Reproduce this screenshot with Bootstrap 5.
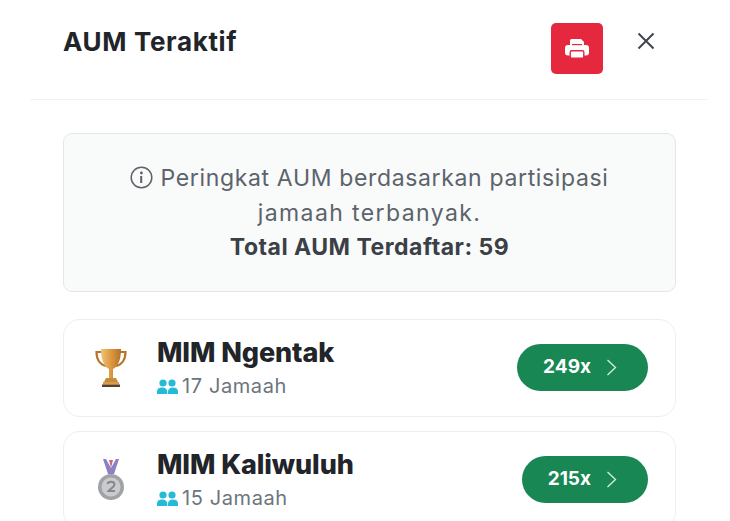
<!doctype html>
<html lang="id"><head><meta charset="utf-8"><title>AUM Teraktif</title>
<link href="https://cdn.jsdelivr.net/npm/bootstrap@5.3.0/dist/css/bootstrap.min.css" rel="stylesheet">
<style>
html,body{height:521px;overflow:hidden;background:#fff}
body{font-family:Inter,"Liberation Sans",sans-serif;color:#212529}
.sheet{margin:0 22px 0 30px;overflow:hidden;height:521px}
.head-bar{height:100px;border-bottom:1px solid #f1f2f3;padding:0 49px 0 33px}
.head-title{font-size:26px;font-weight:700;color:#212529;letter-spacing:.65px;margin:0;line-height:1;position:relative;top:-8px}
.print-btn{width:52px;height:51px;background:#e6283f;border:0;border-radius:5px;padding:0;margin-right:30px;position:relative;top:-1px}
.close-x{background:none;border:0;padding:0;width:26px;height:26px;position:relative;top:-9px}
.main-area{padding:33px 32px 0 33px}
.info-box{height:159px;background:#f9fafa;border:1px solid #e4e7ea;border-radius:9px;padding:27px 30px 0;text-align:center;font-size:23px;line-height:34.5px;color:#5c636a;margin-bottom:27px;letter-spacing:.65px}
.info-box svg{vertical-align:-3px}
.info-wide{letter-spacing:1.4px}
.info-total{font-weight:700;color:#3a4046;font-size:23px;letter-spacing:.5px}
.rank-row{height:98px;border:1px solid #eceef0;border-radius:17px;background:#fff;padding:0 27px 0 30px;margin-bottom:14px}
.rank-icon{width:34px;flex:none;margin-right:29px}
.rank-name{font-size:27px;font-weight:800;line-height:32px;color:#212529;letter-spacing:-.1px}
.rank-sub{font-size:20px;line-height:26px;color:#6c757d;margin-top:4px;letter-spacing:.6px}
.rank-sub svg{vertical-align:-1px;margin-right:4px}
.count-pill{height:47px;background:#198754;color:#fff;border:0;border-radius:24px;font-size:19px;font-weight:700;padding:0 31px 0 26px;gap:15px;margin-top:-1px;margin-left:-1px}
</style></head><body>
<div class="sheet">
  <div class="head-bar d-flex align-items-center">
    <h1 class="head-title flex-grow-1">AUM Teraktif</h1>
    <button class="print-btn d-flex align-items-center justify-content-center" aria-label="Cetak">
      <svg width="24" height="20" viewBox="0 0 24 20"><path fill="#fff" d="M6.500 0h9.500l3 3v4H5V1.500A1.500 1.500 0 0 1 6.500 0z"/><rect y="6" width="24" height="10.500" rx="3" fill="#fff"/><rect x="5.200" y="11.700" width="13.600" height="7.600" rx="1.500" fill="#fff" stroke="#e6283f" stroke-width="1.400"/><path fill="#e6283f" d="M7 5h10v1.200H7z"/></svg>
    </button>
    <button class="close-x" aria-label="Tutup"><svg width="26" height="26" viewBox="0 0 26 26"><path d="M5.500 5.500l15 15M20.500 5.500l-15 15" stroke="#3f4650" stroke-width="2" fill="none"/></svg></button>
  </div>
  <div class="main-area">
    <div class="info-box">
      <svg width="23" height="23" viewBox="0 0 23 23"><circle cx="11.500" cy="11.500" r="10.300" fill="none" stroke="#5c636a" stroke-width="1.500"/><path d="M10.200 10h2v7h-2zM10 7a1.400 1.400 0 1 0 2.800 0 1.400 1.400 0 1 0-2.800 0z" fill="#5c636a"/></svg>
      Peringkat AUM berdasarkan partisipasi<br><span class="info-wide">jamaah terbanyak.</span><br><span class="info-total">Total AUM Terdaftar: 59</span>
    </div>
    <div class="rank-row d-flex align-items-center">
      <svg class="rank-icon" height="40" viewBox="0 0 34 40">
        <defs><linearGradient id="goldcup" x1="0" x2="1" y1="0" y2="0"><stop offset="0" stop-color="#f0c274"/><stop offset=".55" stop-color="#d9953c"/><stop offset="1" stop-color="#b4702a"/></linearGradient></defs>
        <path d="M8 4H2.500c0 8 4 13 10 14M26 4h5.500c0 8-4 13-10 14" fill="none" stroke="#b8732a" stroke-width="2.200"/>
        <path d="M7 1h20c0 9-2 17-8 20v9h-4v-9C9 18 7 10 7 1z" fill="url(#goldcup)"/>
        <path d="M12 30h10l2 4H10z" fill="#c98a3a"/><path d="M9 34h16v2.500H9z" fill="#d79c4e"/><path d="M8 36.500h18V39H8z" fill="#5c3f24"/>
      </svg>
      <div class="flex-grow-1">
        <div class="rank-name">MIM Ngentak</div>
        <div class="rank-sub"><svg width="21" height="15" viewBox="0 0 21 15"><g fill="#25bbd8"><circle cx="6" cy="4" r="3.600"/><circle cx="15" cy="4" r="3.600"/><path d="M0 15v-2.500C0 10 2 8.500 5 8.500s5 1.500 5.300 4V15zM11 15v-2.500c.3-2.500 2-4 5-4s5 1.500 5 4V15z"/></g></svg>17 Jamaah</div>
      </div>
      <button class="count-pill d-flex align-items-center">249x <svg width="11" height="17" viewBox="0 0 11 17"><path d="M1.500 1l8 7.500-8 7.500" fill="none" stroke="#d8efe3" stroke-width="1.300"/></svg></button>
    </div>
    <div class="rank-row d-flex align-items-center">
      <svg class="rank-icon" height="42" viewBox="0 0 34 42">
        <path d="M9 0l5 15h6l5-15h-3l-5 9-5-9z" fill="#8d80c4"/><path d="M15 1l2 8 2-8z" fill="#c46a7a"/>
        <circle cx="17" cy="28" r="13" fill="#a0a2a6"/><circle cx="17" cy="28" r="9.500" fill="#c9cbce"/>
        <path d="M13.500 25c1-3 7-3 7 .5 0 2.500-4.500 4-6 6.500h6.500" fill="none" stroke="#85878b" stroke-width="2"/>
      </svg>
      <div class="flex-grow-1">
        <div class="rank-name">MIM Kaliwuluh</div>
        <div class="rank-sub"><svg width="21" height="15" viewBox="0 0 21 15"><g fill="#25bbd8"><circle cx="6" cy="4" r="3.600"/><circle cx="15" cy="4" r="3.600"/><path d="M0 15v-2.500C0 10 2 8.500 5 8.500s5 1.500 5.300 4V15zM11 15v-2.500c.3-2.500 2-4 5-4s5 1.500 5 4V15z"/></g></svg>15 Jamaah</div>
      </div>
      <button class="count-pill d-flex align-items-center">215x <svg width="11" height="17" viewBox="0 0 11 17"><path d="M1.500 1l8 7.500-8 7.500" fill="none" stroke="#d8efe3" stroke-width="1.300"/></svg></button>
    </div>
  </div>
</div>
</body></html>
